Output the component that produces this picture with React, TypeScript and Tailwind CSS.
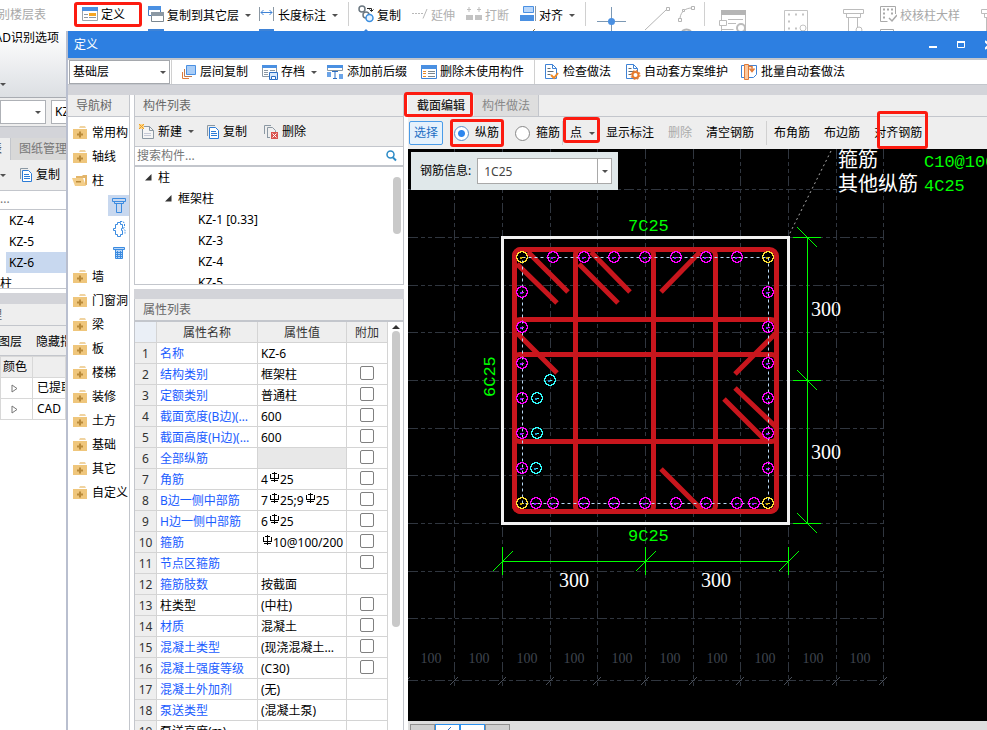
import type { ReactNode } from 'react';

const Caret = ({ className = '' }: { className?: string }) => (
    <svg className={`h-[3px] w-[6px] shrink-0 ${className}`} viewBox="0 0 6 3">
        <path d="M0 0h6L3 3z" fill="#505050" />
    </svg>
);

/* ---------- ribbon icons (31px tall, clipped by the dialog) ---------- */

const DefineIcon = () => (
    <svg width="16" height="31" fill="none">
        <path d="M.5 7.500h15v13H.5z" fill="#fff" stroke="#9aa5ad" />
        <path d="M0 7h16v4H0z" fill="#4a90e2" />
        <path d="M2 14.500h4M2 17.500h4" stroke="#8b98a3" />
        <path d="M7 13h7v3H7z" fill="#f5a623" />
        <path d="M7 17.500h7" stroke="#8b98a3" />
    </svg>
);

const CopyLayerIcon = () => (
    <svg width="16" height="31" fill="none">
        <path d="M.5 6.500h12v9H.5z" fill="#fff" stroke="#4a7fc0" />
        <path d="M0 6h13v4H0z" fill="#4a90e2" />
        <path d="M3.500 12.500h12v9h-12z" fill="#fff" stroke="#7b8790" />
        <path d="M3 12h13v4H3z" fill="#8b98a3" />
        <path d="M0 29h16v2H0z" fill="#3f83d6" />
    </svg>
);

const LengthIcon = () => (
    <svg width="16" height="31" fill="none">
        <path d="M.5 7v14M14.500 7v14" stroke="#8b98a3" />
        <path d="M2 12.500h11M4.500 10L2 12.500 4.500 15M10.500 10l2.500 2.500-2.500 2.500" stroke="#3f83d6" />
        <path d="M0 29h15v2H0z" fill="#3f83d6" />
    </svg>
);

const CopyIcon = () => (
    <svg width="16" height="31" fill="none">
        <circle cx="4" cy="9" r="3" stroke="#6b7780" strokeWidth="1.500" />
        <circle cx="8" cy="15" r="3" stroke="#6b7780" strokeWidth="1.500" fill="#fff" />
        <circle cx="11.500" cy="18" r="3.500" stroke="#3c8fe0" strokeWidth="1.500" fill="#e8f4ff" />
        <path d="M9 8.500h4.500V11M11.500 9.500l2 2 2-2" stroke="#222" />
        <path d="M6 31l2-2 2 2z" fill="#3f83d6" />
    </svg>
);

const ExtendIcon = () => (
    <svg width="16" height="31" fill="none" stroke="#b9b9b9">
        <path d="M0 13.500h12" strokeDasharray="2 1" />
        <path d="M11 18.500L15 9" />
    </svg>
);

const BreakIcon = () => (
    <svg width="16" height="31" fill="none">
        <path d="M0 15h7v5H0zM9 15h7v5H9z" fill="#c3c3c3" />
        <path d="M3 7v5M1 9.500h4M13 7v5M11 9.500h4" stroke="#bdbdbd" />
    </svg>
);

const AlignIcon = () => (
    <svg width="16" height="31" fill="none">
        <path d="M3.500 6.500h10v6h-10z" fill="#b9d7fb" stroke="#4a90e2" />
        <path d="M0 15h14v6H0z" fill="#4a90e2" />
        <path d="M15.500 6v15" stroke="#8b98a3" />
        <path d="M13 31l2-2" stroke="#8a6a3a" />
    </svg>
);

const PointIcon = () => (
    <svg width="30" height="31" fill="none">
        <path d="M15.500 7v24M1 21.500h29" stroke="#7b98b4" />
        <circle cx="15.500" cy="21.500" r="3.500" fill="#4a90e2" />
    </svg>
);

const LineIcon = () => (
    <svg width="26" height="31" fill="none" stroke="#b5b5b5">
        <path d="M1 30L22 10" />
        <path d="M22.500 7.500h3v3h-3z" />
    </svg>
);

const ArcIcon = () => (
    <svg width="18" height="31" fill="none" stroke="#b5b5b5">
        <path d="M2 18C3 11 8 8 14 8" />
        <path d="M.5 18.500h3v3h-3zM13.500 6.500h3v3h-3zM4.500 9.500h2v2h-2z" fill="#fff" />
        <path d="M4 31c3-2 6-2 9 0" strokeWidth="2" />
    </svg>
);

const TableSearchIcon = () => (
    <svg width="28" height="31" fill="none" stroke="#bcbcbc">
        <path d="M2.500 10.500h24V31M2.500 10v21" />
        <path d="M2 10h25v5H2z" fill="#b5b5b5" stroke="none" />
        <path d="M.5 20.500h7v5h-7zM9 19.500h15M9 23.500h8" fill="#fff" />
        <path d="M2.500 29.500h12" />
        <circle cx="22" cy="28" r="4" strokeWidth="2" fill="#fff" />
    </svg>
);

const SectionIcon = () => (
    <svg width="26" height="31" fill="none" stroke="#c4c4c4">
        <path d="M1.500 31V10.500h23V31" />
        <path d="M5 14.500h2M12 14.500h2M19 14.500h2M5 21.500h2M5 28.500h2M12 28.500h2" strokeWidth="2" />
        <circle cx="20" cy="28" r="3" />
    </svg>
);

const ColumnIcon = () => (
    <svg width="22" height="31" fill="none" stroke="#bcbcbc">
        <path d="M1.500 9.500h20v4h-20zM4.500 13.500h14v4h-14zM6.500 17.500V31M15.500 17.500V27" />
        <circle cx="17" cy="30" r="3" />
    </svg>
);

const CheckSectionIcon = () => (
    <svg width="17" height="31" fill="none" stroke="#a9a9a9">
        <path d="M15.500 14V6.500H.5v15h7" />
        <path d="M3 9.500h2M7 9.500h2M11 9.500h2M3 13.500h2M3 17.500h2M11 13.500h2" strokeWidth="2" />
        <path d="M9 18l3 3 5-6" strokeWidth="1.500" />
        <path d="M.5 31v-1.500h13V31" />
    </svg>
);

/* ---------- dialog toolbar icons ---------- */

const LayerCopyIcon = () => (
    <svg width="16" height="16" fill="none">
        <path d="M5.500 1.500h9v9h-9z" fill="#a9cdf7" stroke="#4a90e2" />
        <path d="M3.500 5v7.500H11" stroke="#c07a50" />
        <path d="M1.500 8v6.500H8" stroke="#e07b39" />
    </svg>
);

const ArchiveIcon = () => (
    <svg width="16" height="16" fill="none">
        <path d="M.5 1.500h14v11H.5z" fill="#fff" stroke="#8b98a3" />
        <path d="M0 1h15v3H0z" fill="#4a90e2" />
        <path d="M2 6.500h4M2 8.500h4M2 10.500h4M8 6.500h5" stroke="#8b98a3" />
        <path d="M7.500 8.500h8v7h-8z" fill="#d8e9fc" stroke="#2c6fc4" />
        <path d="M9.500 12.500h4v3h-4z" fill="#fff" stroke="#2c6fc4" />
    </svg>
);

const PrefixIcon = () => (
    <svg width="17" height="16" fill="none">
        <path d="M.5 1.500h15v5H.5z" fill="#fff" stroke="#8b98a3" />
        <path d="M0 1h16v3H0z" fill="#4a90e2" />
        <path d="M0 8h4v5H0zM12 10h4v5h-4z" fill="#6ba4e8" />
        <path d="M5 7.500h6M8 7.500v7M6 14.500h4" stroke="#2c6fc4" />
    </svg>
);

const PurgeIcon = () => (
    <svg width="16" height="16" fill="none">
        <path d="M.5 1.500h15v13H.5z" fill="#fff" stroke="#3f83d6" />
        <path d="M0 1h16v4H0z" fill="#4a90e2" />
        <path d="M2 7.500h3M2 9.500h3M2 12.500h3" stroke="#e58a2b" />
        <path d="M7 7.500h7M7 9.500h7M7 12.500h7" stroke="#7b8790" />
    </svg>
);

const DocIcon = ({ children }: { children: ReactNode }) => (
    <svg width="16" height="16" fill="none">
        <path d="M1.500.5h7l4 4v10h-11z" fill="#fff" stroke="#3f83d6" />
        <path d="M8.500.5v4h4" stroke="#3f83d6" />
        <path d="M3.500 4.500h3M3.500 7.500h6M3.500 10.500h3" stroke="#5b6b78" />
        {children}
    </svg>
);

const BatchIcon = () => (
    <svg width="17" height="16" fill="none">
        <path d="M.5 1.500h15v9l-3 3H.5z" fill="#fff" stroke="#3f83d6" />
        <path d="M3.500.5h4v15h-4z" fill="#fbc9a0" stroke="#e07b39" />
        <path d="M7 2.500h4v4M8.500 4.500l2.500 3 2.500-3" stroke="#e07b39" strokeWidth="1.500" />
    </svg>
);

const PagesIcon = () => (
    <svg width="14" height="16" fill="none">
        <path d="M1.500 12V1.500H9" stroke="#8b98a3" />
        <path d="M3.500 3.500h6l3 3v8h-9z" fill="#fff" stroke="#2c7cd6" />
        <path d="M5 7.500h5M5 9.500h6M5 11.500h6" stroke="#2c7cd6" />
    </svg>
);

const NewIcon = () => (
    <svg width="16" height="16" fill="none">
        <path d="M3.500 2.500h7l4 4v8h-11z" fill="#f5f5f5" stroke="#8b98a3" />
        <path d="M10.500 2.500v4h4" stroke="#8b98a3" />
        <path d="M5 9.500h7M5 11.500h7" stroke="#c5c9d6" />
        <path d="M0 0h5v5H0z" fill="#fbd48b" />
        <path d="M0 0l5 5M5 0L0 5" stroke="#f0a020" />
    </svg>
);

const RemoveIcon = () => (
    <svg width="16" height="16" fill="none">
        <path d="M1.500 10V1.500H8M4.500 13.500v-10h5l3 3V8M4 13.500h3" stroke="#8b98a3" />
        <path d="M8 8h7v7H8z" fill="#d9534f" />
        <path d="M9.500 9.500l4 4M13.500 9.500l-4 4" stroke="#fff" />
    </svg>
);

const Folder = ({ open = false }: { open?: boolean }) =>
    open ? (
        <svg width="16" height="14" className="shrink-0">
            <path d="M4 2h6l1-1h4v10h-2V4H4z" fill="#e3b56a" />
            <path d="M0 4h11l3 8H3z" fill="#f3cd88" />
            <path d="M4 7h5v1.500H4z" fill="#b98a3a" />
        </svg>
    ) : (
        <svg width="16" height="14" className="shrink-0">
            <path d="M8 0h5l1 2H7z" fill="#f0d3a0" />
            <path d="M1 3h14v10H1z" fill="#efc67c" />
            <path d="M7 5.500h2v2h2v2H9v2H7v-2H5v-2h2z" fill="#b98a3a" />
        </svg>
    );

const RebarMark = () => (
    <svg width="12" height="11" className="inline-block align-[1px]" fill="none" stroke="#000">
        <path d="M6.500 0v10M2 6.500h9M3 8.500h7" />
        <path d="M4 1.500h5M2.500 2v4M10.500 2v4" />
    </svg>
);

const Mark = ({ className }: { className: string }) => (
    <span className={`pointer-events-none absolute z-10 rounded-[3px] border-3 border-[#fc1b10] ${className}`} />
);

type ToolProps = { icon?: ReactNode; label: string; caret?: boolean; className?: string };

const Tool = ({ icon, label, caret, className = '' }: ToolProps) => (
    <button className={`flex shrink-0 items-center gap-[3px] whitespace-nowrap ${className}`}>
        {icon}
        <span>{label}</span>
        {caret && <Caret className="ml-[3px]" />}
    </button>
);

const Sep = ({ className = '' }: { className?: string }) => (
    <span className={`h-6 w-px shrink-0 bg-[#d0d0d0] ${className}`} />
);

const Ribbon = () => (
    <header className="flex h-[31px] shrink-0 items-start overflow-hidden bg-white leading-[29px]">
        <span className="-ml-[2px] w-[76px] shrink-0 text-[#a8a8a8]">别楼层表</span>
        <button className="relative flex w-[68px] shrink-0 items-start gap-[3px] pl-2">
            <DefineIcon />
            <span>定义</span>
            <Mark className="inset-x-0 top-[2px] h-[25px]" />
        </button>
        <Tool className="ml-[6px]" icon={<CopyLayerIcon />} label="复制到其它层" caret />
        <Tool className="ml-2" icon={<LengthIcon />} label="长度标注" caret />
        <Sep className="ml-[10px] mt-[2px]" />
        <Tool className="ml-[9px]" icon={<CopyIcon />} label="复制" />
        <Tool className="ml-[11px] text-[#b0b0b0]" icon={<ExtendIcon />} label="延伸" />
        <Tool className="ml-[11px] text-[#b0b0b0]" icon={<BreakIcon />} label="打断" />
        <Tool className="ml-[11px]" icon={<AlignIcon />} label="对齐" caret />
        <Sep className="ml-[10px] mt-[2px]" />
        <button className="ml-[10px]" aria-label="点">
            <PointIcon />
        </button>
        <button className="ml-[18px]" aria-label="直线">
            <LineIcon />
        </button>
        <button className="ml-2" aria-label="弧线">
            <ArcIcon />
        </button>
        <Sep className="ml-2 mt-[2px]" />
        <button className="ml-[14px]" aria-label="柱表">
            <TableSearchIcon />
        </button>
        <button className="ml-9" aria-label="柱大样">
            <SectionIcon />
        </button>
        <button className="ml-[33px]" aria-label="识别柱">
            <ColumnIcon />
        </button>
        <Tool className="ml-4 text-[#a8a8a8]" icon={<CheckSectionIcon />} label="校核柱大样" />
        <button className="ml-5" aria-label="更多">
            <ColumnIcon />
        </button>
    </header>
);

const Backdrop = () => (
    <aside className="flex w-[66px] shrink-0 flex-col overflow-hidden whitespace-nowrap bg-white">
        <div className="h-[67px] shrink-0 border-b border-[#a9acb2] bg-gradient-to-b from-white to-[#dcdfe3]">
            <p className="-ml-[13px] leading-[13px]">CAD识别选项</p>
            <Caret className="mt-[39px]" />
        </div>
        <div className="flex h-[29px] shrink-0 items-center border-b border-[#b5b8be] bg-[#eee]">
            <span className="flex h-6 w-[46px] shrink-0 items-center justify-end border border-[#aeb1b6] bg-white pr-1">
                <Caret />
            </span>
            <span className="ml-[5px] h-6 w-20 shrink-0 border border-[#aeb1b6] bg-white pl-[3px] leading-[22px]">
                KZ-6
            </span>
        </div>
        <div className="h-[11px] shrink-0 bg-[#d3d4d9]" />
        <div className="flex h-[22px] shrink-0 bg-[#d8d8d8] leading-[22px] text-[#777]">
            <span className="w-[11px] shrink-0 overflow-hidden border-r border-[#c3c6cc] bg-[#eee] text-[#333]">
                <span className="-ml-[10px]">表</span>
            </span>
            <span className="pl-2">图纸管理</span>
        </div>
        <div className="flex h-[31px] shrink-0 items-center border-b border-[#c3c6cc] bg-[#eee]">
            <Caret />
            <Tool className="ml-[13px]" icon={<PagesIcon />} label="复制" />
        </div>
        <div className="h-[19px] shrink-0 border-b border-[#c3c6cc] leading-4 text-[#777]">...</div>
        <ul className="h-[79px] shrink-0 overflow-hidden border-b border-[#c3c6cc] leading-[21px]">
            <li className="pl-[9px]">KZ-4</li>
            <li className="pl-[9px]">KZ-5</li>
            <li className="ml-[6px] bg-[#c8d8ef] pl-[3px]">KZ-6</li>
            <li>柱</li>
        </ul>
        <div className="mt-1 h-[11px] shrink-0 bg-[#d3d4d9]" />
        <div className="h-[22px] shrink-0 border-b border-[#c3c6cc] bg-[#eee] leading-[21px] text-[#666]">
            <span className="-ml-[10px]">理</span>
        </div>
        <div className="flex h-[30px] shrink-0 gap-[14px] border-b border-[#c3c6cc] bg-[#eee] pt-px leading-[30px]">
            <span className="-ml-[2px]">图层</span>
            <span>隐藏指</span>
        </div>
        <table className="w-full shrink-0 table-fixed border-collapse text-left [&_td]:border [&_td]:border-[#d8d8d8] [&_th]:border [&_th]:border-[#d8d8d8] [&_tr]:h-[21px]">
            <thead className="bg-[#eee]">
                <tr>
                    <th className="w-8 pl-[2px] font-normal">颜色</th>
                    <th />
                </tr>
            </thead>
            <tbody>
                {['已提取', 'CAD'].map((name) => (
                    <tr key={name}>
                        <td className="pl-[10px]">
                            <svg width="7" height="9" fill="none">
                                <path d="M1 1v7l5-3.500z" stroke="#777" />
                            </svg>
                        </td>
                        <td className="overflow-hidden pl-1">{name}</td>
                    </tr>
                ))}
            </tbody>
        </table>
    </aside>
);

const TitleBar = () => (
    <div className="flex h-[27px] shrink-0 items-center justify-between overflow-hidden bg-[#2d7fe1] pl-[6px] text-white">
        <span>定义</span>
        <div className="flex w-[58px] gap-5 overflow-hidden">
            <button aria-label="最小化" className="shrink-0">
                <svg width="8" height="10">
                    <path d="M0 6h8v2H0z" fill="#fff" />
                </svg>
            </button>
            <button aria-label="最大化" className="shrink-0">
                <svg width="8" height="10" fill="none">
                    <path d="M.5 2h7v5.500h-7z" stroke="#fff" />
                    <path d="M0 1h8v2H0z" fill="#fff" />
                </svg>
            </button>
            <button aria-label="关闭" className="shrink-0">
                <svg width="8" height="10">
                    <path d="M0 1l8 8M8 1L0 9" stroke="#fff" strokeWidth="2" />
                </svg>
            </button>
        </div>
    </div>
);

const DialogToolbar = () => (
    <div className="flex h-[27px] shrink-0 items-center overflow-hidden border-b border-t-2 border-[#c3c6cc] bg-white">
        <div className="relative ml-px h-6 w-[101px] shrink-0">
            <select
                aria-label="楼层"
                className="h-full w-full appearance-none border border-[#a5a8ad] bg-white pl-[3px] outline-none"
            >
                <option>基础层</option>
            </select>
            <Caret className="absolute right-1 top-[11px]" />
        </div>
        <Sep className="ml-px h-4" />
        <Tool className="ml-[9px]" icon={<LayerCopyIcon />} label="层间复制" />
        <Tool className="ml-[14px]" icon={<ArchiveIcon />} label="存档" caret />
        <Tool className="ml-[10px]" icon={<PrefixIcon />} label="添加前后缀" />
        <Tool className="ml-[14px]" icon={<PurgeIcon />} label="删除未使用构件" />
        <Sep className="ml-[10px] h-4" />
        <Tool
            className="ml-[9px]"
            icon={
                <DocIcon>
                    <path d="M7 11l3 3 4-5" stroke="#f08a24" strokeWidth="2" />
                </DocIcon>
            }
            label="检查做法"
        />
        <Tool
            className="ml-[14px]"
            icon={
                <DocIcon>
                    <circle cx="10.500" cy="11" r="3" fill="#fff" stroke="#e8792b" strokeWidth="2" />
                    <circle cx="10.500" cy="11" r="4.500" stroke="#e8792b" strokeDasharray="2 1.500" />
                </DocIcon>
            }
            label="自动套方案维护"
        />
        <Tool className="ml-[13px]" icon={<BatchIcon />} label="批量自动套做法" />
    </div>
);

const NavItem = ({ label, open }: { label: string; open?: boolean }) => (
    <li className="flex h-6 items-center gap-1 overflow-hidden whitespace-nowrap pl-1">
        <Folder open={open} />
        {label}
    </li>
);

const NavTree = () => (
    <nav className="w-[62px] shrink-0 overflow-hidden border-r border-[#c3c6cc] bg-white">
        <h2 className="h-[22px] border-b border-[#c3c6cc] bg-[#eee] pl-2 leading-[21px] text-[#666]">导航树</h2>
        <ul className="pt-1">
            <NavItem label="常用构" />
            <NavItem label="轴线" />
            <NavItem label="柱" open />
            <li className="flex h-6 items-center justify-end">
                <span className="flex h-[21px] w-[21px] items-center justify-center bg-[#c8d8ef]">
                    <svg width="14" height="16" fill="none" stroke="#3b8be0">
                        <path d="M.5 1.500h13v3H.5zM2.500 4.500h9v2h-9zM4.500 6.500h5v9h-5z" />
                    </svg>
                </span>
            </li>
            <li className="flex h-6 items-center justify-end pr-[3px]">
                <svg width="14" height="16" fill="none" stroke="#3b8be0">
                    <path d="M3.500 3.500h2v-2h3v2h2v4h-1v2h1v4h-2v2h-3v-2h-2v-4h-2v-2h2z" />
                    <path d="M8 .5h3l1.500 2v3l-1 2 1.500 2v3" strokeDasharray="2 1" />
                </svg>
            </li>
            <li className="flex h-6 items-center justify-end pr-1">
                <svg width="12" height="14" fill="none" stroke="#3b8be0">
                    <path d="M.5 1.500h11v2H.5zM2.500 3.500v9h7v-9" fill="#b8d6f8" />
                    <path d="M2 6.500h8M2 8.500h8M2 10.500h8M4.500 5v8M7.500 5v8" />
                </svg>
            </li>
            {['墙', '门窗洞', '梁', '板', '楼梯', '装修', '土方', '基础', '其它', '自定义'].map((label) => (
                <NavItem key={label} label={label} />
            ))}
        </ul>
    </nav>
);

const Expander = () => (
    <svg width="7" height="7" className="shrink-0">
        <path d="M6.500 0v6.500H0z" fill="#333" />
    </svg>
);

const ComponentList = () => (
    <section className="flex h-[190px] shrink-0 flex-col border border-t-0 border-[#c3c6cc] bg-white">
        <h2 className="h-[22px] shrink-0 border-b border-[#c3c6cc] bg-[#eee] pl-2 leading-[21px] text-[#666]">
            构件列表
        </h2>
        <div className="flex h-[30px] shrink-0 items-center border-b border-[#c3c6cc] bg-[#eee] pl-1">
            <Tool icon={<NewIcon />} label="新建" caret />
            <Tool className="ml-3" icon={<PagesIcon />} label="复制" />
            <Tool className="ml-4" icon={<RemoveIcon />} label="删除" />
        </div>
        <div className="flex h-5 shrink-0 items-center border-b-2 border-[#c3c6cc] pr-[6px]">
            <input
                type="search"
                aria-label="搜索构件"
                placeholder="搜索构件..."
                className="min-w-0 flex-1 pl-[2px] outline-none placeholder:text-[#777]"
            />
            <svg width="11" height="12" fill="none" stroke="#2b8ac6">
                <circle cx="4.500" cy="4.500" r="3.500" strokeWidth="1.500" />
                <path d="M7 7.500l3 3" strokeWidth="2" />
            </svg>
        </div>
        <div className="flex min-h-0 flex-1 overflow-hidden">
            <ul className="flex-1 leading-[21px]">
                <li className="flex items-center gap-[6px] pl-[10px]">
                    <Expander />柱
                </li>
                <li className="flex items-center gap-[6px] pl-[30px]">
                    <Expander />
                    框架柱
                </li>
                {['KZ-1 [0.33]', 'KZ-3', 'KZ-4', 'KZ-5'].map((name) => (
                    <li key={name} className="pl-[63px]">
                        {name}
                    </li>
                ))}
            </ul>
            <span className="mr-[2px] mt-[10px] h-[57px] w-2 rounded-full bg-[#c9c9c9]" />
        </div>
    </section>
);

type Prop = { name: string; value?: ReactNode; box?: boolean; plain?: boolean; muted?: boolean };

const properties: Prop[] = [
    { name: '名称', value: 'KZ-6' },
    { name: '结构类别', value: '框架柱', box: true },
    { name: '定额类别', value: '普通柱', box: true },
    { name: '截面宽度(B边)(mm)', value: '600', box: true },
    { name: '截面高度(H边)(mm)', value: '600', box: true },
    { name: '全部纵筋', box: true, muted: true },
    { name: '角筋', value: <>4<RebarMark />25</>, box: true },
    { name: 'B边一侧中部筋', value: <>7<RebarMark />25;9<RebarMark />25</>, box: true },
    { name: 'H边一侧中部筋', value: <>6<RebarMark />25</>, box: true },
    { name: '箍筋', value: <><RebarMark />10@100/200</>, box: true },
    { name: '节点区箍筋', box: true },
    { name: '箍筋肢数', value: '按截面' },
    { name: '柱类型', value: '(中柱)', box: true, plain: true },
    { name: '材质', value: '混凝土', box: true },
    { name: '混凝土类型', value: '(现浇混凝土碎石)', box: true },
    { name: '混凝土强度等级', value: '(C30)', box: true },
    { name: '混凝土外加剂', value: '(无)' },
    { name: '泵送类型', value: '(混凝土泵)' },
    { name: '泵送高度(m)', plain: true },
];

const PropertyList = () => (
    <section className="flex min-h-0 flex-1 flex-col overflow-hidden border-x border-[#c3c6cc] bg-white">
        <h2 className="h-[23px] shrink-0 border-b-2 border-[#c3c6cc] bg-[#eee] pl-2 leading-[21px] text-[#666]">
            属性列表
        </h2>
        <div className="flex min-h-0 flex-1 overflow-hidden">
            <table className="h-fit w-[253px] table-fixed border-separate border-spacing-0 whitespace-nowrap [&_td]:border-b [&_td]:border-r [&_td]:border-[#d4d4d4] [&_th]:border-b [&_th]:border-r [&_th]:border-[#d4d4d4] [&_th]:font-normal [&_tr]:h-[21px]">
                <thead className="bg-[#eee] text-[#333]">
                    <tr>
                        <th className="w-[22px] bg-[#eaeff6]" />
                        <th className="w-[101px] pt-px">属性名称</th>
                        <th className="w-[89px] pt-px">属性值</th>
                        <th className="pt-px">附加</th>
                    </tr>
                </thead>
                <tbody>
                    {properties.map(({ name, value, box, plain, muted }, i) => (
                        <tr key={name}>
                            <td className="bg-[#eee] pt-[2px] text-center text-[#333]">{i + 1}</td>
                            <td className={`truncate pl-[3px] pr-1 pt-[2px] ${plain ? '' : 'text-[#1a5cff]'}`}>
                                {name}
                            </td>
                            <td className={`truncate pl-[3px] pt-[2px] ${muted ? 'bg-[#e8e8e8]' : ''}`}>{value}</td>
                            <td className="pb-[2px] text-center leading-none">
                                {box && (
                                    <input
                                        type="checkbox"
                                        aria-label={`附加 ${name}`}
                                        className="h-[14px] w-[14px] appearance-none rounded-[2px] border border-[#808080] bg-white align-middle"
                                    />
                                )}
                            </td>
                        </tr>
                    ))}
                </tbody>
            </table>
            <div className="flex flex-1 flex-col items-center pt-[3px]">
                <svg width="8" height="4">
                    <path d="M4 0l4 4H0z" fill="#333" />
                </svg>
                <span className="mt-[2px] h-[296px] w-2 rounded-full bg-[#c9c9c9]" />
            </div>
        </div>
    </section>
);

/* ---------- section drawing ---------- */

const GRID_X = [46, 94, 142, 189, 237, 285, 332, 380, 428, 475];
const GRID_Y = [40, 88, 136, 183, 231, 279, 326, 374, 422, 469, 531];

const HOOKS = [
    'M109 115l40 39M120 103l40 40',
    'M171 115l39 39M183 103l39 40',
    'M292 103l-39 40M253 320l41 41',
    'M109 184l40 40M368 184l-41 41',
    'M327 239l41 39M316 250l41 41',
];

const TOP_BARS = [145, 176, 206, 237, 268, 298, 329];
const BOTTOM_BARS = [128, 145, 176, 206, 237, 268, 298, 329, 346];
const SIDE_BARS = [143, 178, 214, 249, 284, 319];

const Bar = ({ x, y, color, core = '#7a20ff' }: { x: number; y: number; color: string; core?: string }) => (
    <g shapeRendering="crispEdges">
        <circle cx={x} cy={y} r="5.300" fill="none" stroke={color} strokeWidth="1.200" />
        <path d={`M${x - 2} ${y + 1}h2`} stroke={core} strokeWidth="2" />
        <path d={`M${x} ${y + 0.5}h2`} stroke={color} />
    </g>
);

const SectionDrawing = () => (
    <svg className="block h-full w-full" fill="none" fontFamily="'Liberation Serif', 'Noto Sans CJK SC', serif">
        <g stroke="#30363f" strokeDasharray="10 3 4 3 4 3">
            {GRID_X.map((x) => (
                <path key={x} d={`M${x + 0.5} 0v538`} />
            ))}
            {GRID_Y.map((y) => (
                <path key={y} d={`M0 ${y + 0.5}h475`} />
            ))}
        </g>
        <g stroke="#4a505a" shapeRendering="crispEdges">
            {[-2, ...GRID_X].map((x) => (
                <path key={x} d={`M${x - 4} 536l8-8`} />
            ))}
        </g>
        <g fill="#3f454f" fontSize="14" textAnchor="middle">
            {GRID_X.map((x) => (
                <text key={x} x={x - 23} y="514">
                    100
                </text>
            ))}
        </g>

        <rect x="94.500" y="88.500" width="286" height="286" stroke="#f2f2f2" strokeWidth="3" />
        <g stroke="#c8161d" strokeWidth="5">
            <rect x="106.500" y="100.500" width="262" height="262" rx="7" />
            <rect x="167.500" y="100.500" width="78" height="262" rx="5" />
            <rect x="106.500" y="100.500" width="201" height="262" rx="6" />
            <rect x="106.500" y="170.500" width="262" height="192" rx="6" />
            <rect x="106.500" y="205.500" width="262" height="87" rx="5" />
            {HOOKS.map((d) => (
                <path key={d} d={d} />
            ))}
        </g>
        <rect x="114.500" y="108.500" width="246" height="246" stroke="#b9d9f5" strokeDasharray="3 3" />

        {TOP_BARS.map((x) => (
            <Bar key={x} x={x} y={108} color="#f0f" />
        ))}
        {BOTTOM_BARS.map((x) => (
            <Bar key={x} x={x} y={354} color="#f0f" />
        ))}
        {SIDE_BARS.map((y) => (
            <g key={y}>
                <Bar x={114} y={y} color="#f0f" />
                <Bar x={360} y={y} color="#f0f" />
            </g>
        ))}
        <Bar x={114} y={108} color="#ffe135" core="#c9a800" />
        <Bar x={360} y={108} color="#ffe135" core="#c9a800" />
        <Bar x={114} y={354} color="#ffe135" core="#c9a800" />
        <Bar x={360} y={354} color="#ffe135" core="#c9a800" />
        <Bar x={142} y={231} color="#3ff" core="#2a8fd0" />
        <Bar x={129} y={249} color="#3ff" core="#2a8fd0" />
        <Bar x={129} y={284} color="#3ff" core="#2a8fd0" />
        <Bar x={128} y={319} color="#3ff" core="#2a8fd0" />

        <g stroke="#0f0" shapeRendering="crispEdges">
            <path d="M399.500 88v287M94 412.500h287" />
            {[88, 231, 374].map((y) => (
                <path key={y} d={`M385 ${y + 0.5}h28M389 ${y - 10}l20 20`} />
            ))}
            {[94, 237, 380].map((x) => (
                <path key={x} d={`M${x + 0.5} 398v28M${x - 9} 422l20-20`} />
            ))}
        </g>
        <path d="M423 2l-42 84" stroke="#aaa" strokeDasharray="2 3" />

        <g fill="#0f0" fontSize="17" fontFamily="'Liberation Mono', monospace">
            <text x="220" y="82">7C25</text>
            <text x="220" y="392">9C25</text>
            <text transform="translate(87 248) rotate(-90)">6C25</text>
            <text x="516" y="18">C10@100</text>
            <text x="516" y="42">4C25</text>
        </g>
        <g fill="#fff" fontSize="20">
            <text x="403" y="167">300</text>
            <text x="403" y="310">300</text>
            <text x="151" y="438">300</text>
            <text x="293" y="438">300</text>
            <text x="430" y="18">箍筋</text>
            <text x="430" y="42">其他纵筋</text>
        </g>
    </svg>
);

const RADIO =
    'h-[15px] w-[15px] shrink-0 appearance-none rounded-full border border-[#888] bg-white checked:border-[#5a8fc8] checked:bg-[radial-gradient(circle,#2d86ee_0_3px,#fff_4px)]';

const SectionEditor = () => (
    <section className="flex min-w-0 flex-1 flex-col bg-[#eee]">
        <div className="flex h-[22px] shrink-0 border-b border-[#c3c6cc] leading-[21px]">
            <button className="relative w-[66px] font-medium text-[#222]">
                截面编辑
                <Mark className="-left-1 -top-[3px] h-[25px] w-[69px]" />
            </button>
            <button className="w-[65px] border-r border-[#c3c6cc] bg-[#dedede] text-[#888]">构件做法</button>
        </div>
        <div className="flex h-8 shrink-0 items-center whitespace-nowrap pl-px">
            <button className="h-6 w-[34px] shrink-0 rounded-[2px] border border-[#4a9be8] bg-[#e5f1fc] text-[#1d6fc4]">
                选择
            </button>
            <label className="relative ml-[11px] flex items-center gap-[6px]">
                <input type="radio" name="bar" defaultChecked className={RADIO} />
                纵筋
                <Mark className="-left-1 -top-[6px] h-7 w-[54px]" />
            </label>
            <label className="ml-4 flex items-center gap-[6px]">
                <input type="radio" name="bar" className={RADIO} />
                箍筋
            </label>
            <Sep className="ml-[2px]" />
            <button className="relative ml-[7px] flex items-center gap-[7px]">
                点
                <Caret />
                <Mark className="-left-[7px] -top-2 h-[26px] w-[37px]" />
            </button>
            <Tool className="ml-[11px]" label="显示标注" />
            <Tool className="ml-[14px] text-[#aaa]" label="删除" />
            <Tool className="ml-[14px]" label="清空钢筋" />
            <Sep className="ml-3" />
            <Tool className="ml-[7px]" label="布角筋" />
            <Tool className="ml-[14px]" label="布边筋" />
            <button className="relative ml-[14px]">
                对齐钢筋
                <Mark className="-top-[14px] left-[3px] h-[38px] w-[51px]" />
            </button>
        </div>
        <div className="relative min-h-0 flex-1 bg-black">
            <SectionDrawing />
            <div className="absolute left-[3px] top-[3px] flex h-[38px] w-[207px] items-center bg-[#e0e8ea] pl-[9px]">
                <label htmlFor="rebar">钢筋信息:</label>
                <div className="ml-[6px] flex h-[26px] w-[135px] border border-[#a9a9a9] bg-white">
                    <input
                        id="rebar"
                        defaultValue="1C25"
                        className="min-w-0 flex-1 border-r border-[#a9a9a9] pl-[6px] pt-px text-[#444] outline-none"
                    />
                    <button aria-label="展开" className="flex w-[13px] items-center justify-center">
                        <Caret />
                    </button>
                </div>
            </div>
        </div>
        <div className="flex h-[9px] shrink-0 items-end overflow-hidden bg-[#dedede] pl-[2px]">
            <button aria-label="视图一" className="h-[6px] w-[25px] border border-b-0 border-[#8f8f8f] bg-[#d0d0d0]" />
            <button aria-label="视图二" className="flex h-[6px] w-[25px] justify-center border border-b-0 border-[#2b90ee] bg-white">
                <svg width="8" height="5">
                    <path d="M7 2L4 5" stroke="#2c6fc4" />
                </svg>
            </button>
            <button aria-label="视图三" className="h-[6px] w-[25px] border border-b-0 border-[#2b90ee] bg-white" />
            <button aria-label="视图四" className="h-[6px] w-[25px] border border-b-0 border-[#8f8f8f] bg-[#d0d0d0]" />
        </div>
    </section>
);

export default function App() {
    return (
        <div className="flex h-screen flex-col overflow-hidden bg-white font-['Noto_Sans','Noto_Sans_CJK_SC',sans-serif] text-[12px] leading-4 text-black">
            <Ribbon />
            <div className="flex min-h-0 flex-1">
                <Backdrop />
                <main className="flex min-w-0 flex-1 flex-col border-l-2 border-[#b9bfcf] bg-white">
                    <TitleBar />
                    <DialogToolbar />
                    <div className="h-[10px] shrink-0 bg-[#d3d4d9]" />
                    <div className="flex min-h-0 flex-1">
                        <NavTree />
                        <div className="ml-1 flex w-[270px] shrink-0 flex-col">
                            <ComponentList />
                            <div className="mt-1 h-[10px] shrink-0 bg-[#d3d4d9]" />
                            <PropertyList />
                        </div>
                        <div className="w-1 shrink-0" />
                        <SectionEditor />
                    </div>
                </main>
            </div>
        </div>
    );
}
